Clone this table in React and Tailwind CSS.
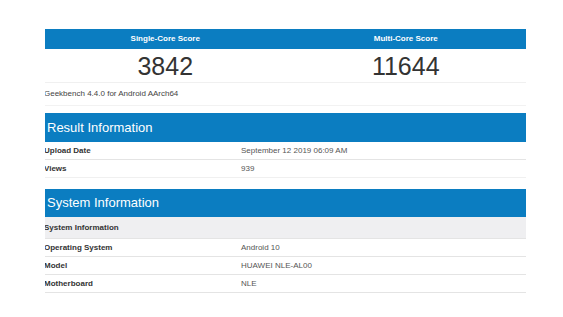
export default function App() {
  const font = { fontFamily: '"Liberation Sans", Arial, sans-serif' };
  const Row = ({ label, value, border = "border-[#e4e4e4]" }) => (
    <div className={`flex h-[18px] items-center pt-[1px] border-b ${border}`}>
      <div className="w-[197px] -ml-px text-[8px] font-bold text-[#333]">{label}</div>
      <div className="text-[8px] text-[#555]">{value}</div>
    </div>
  );
  return (
    <div className="w-[563px] h-[317px] bg-white overflow-hidden" style={font}>
      <div className="ml-[45px] w-[481px] pt-[29px] overflow-hidden">
        <div className="grid grid-cols-2 h-[20px] bg-[#0b7dc1] items-center text-white text-[8px] font-bold">
          <div className="text-center">Single-Core Score</div>
          <div className="text-center">Multi-Core Score</div>
        </div>
        <div className="grid grid-cols-2 h-[34px] items-center border-b border-[#f0f0f0] text-[25px] text-[#333] leading-none">
          <div className="text-center pt-[2px]">3842</div>
          <div className="text-center pt-[2px]">11644</div>
        </div>
        <div className="h-[23px] flex items-center border-b border-[#f2f2f2] text-[8px] text-[#444]">
          <div className="-ml-px">Geekbench 4.4.0 for Android AArch64</div>
        </div>
        <div className="mt-[7px] h-[29px] bg-[#0b7dc1] flex items-center pl-[2px] text-white text-[13px]">
          Result Information
        </div>
        <Row label="Upload Date" value="September 12 2019 06:09 AM" />
        <Row label="Views" value="939" border="border-[#f0f0f0]" />
        <div className="mt-[11px] h-[28px] bg-[#0b7dc1] flex items-center pl-[2px] text-white text-[13px]">
          System Information
        </div>
        <div className="h-[22px] bg-[#efeff1] flex items-center border-b border-[#e4e4e4]">
          <div className="-ml-px text-[8px] font-bold text-[#333]">System Information</div>
        </div>
        <Row label="Operating System" value="Android 10" />
        <Row label="Model" value="HUAWEI NLE-AL00" />
        <Row label="Motherboard" value="NLE" />
      </div>
    </div>
  );
}
